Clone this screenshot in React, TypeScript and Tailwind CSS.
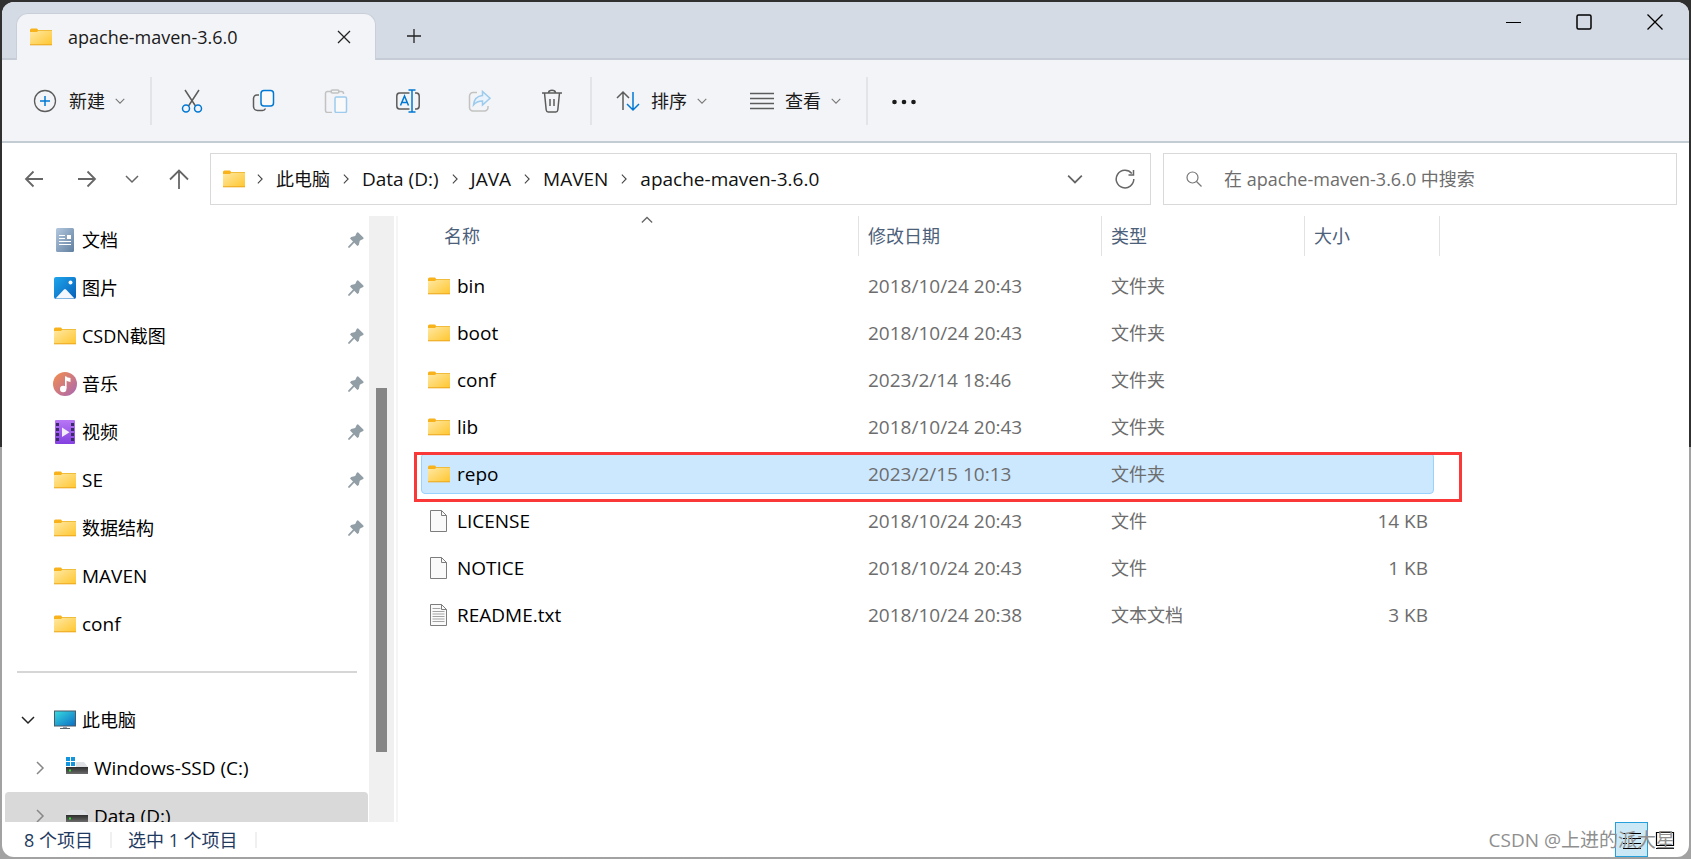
import React from 'react';

type IconKind = 'folder' | 'file' | 'text' | 'doc' | 'picture' | 'music' | 'video' | 'pc' | 'system' | 'drive';

interface FileRow {
  name: string;
  date: string;
  type: string;
  size: string;
  icon: IconKind;
  selected?: boolean;
}

const files: FileRow[] = [
  { name: 'bin', date: '2018/10/24 20:43', type: '文件夹', size: '', icon: 'folder' },
  { name: 'boot', date: '2018/10/24 20:43', type: '文件夹', size: '', icon: 'folder' },
  { name: 'conf', date: '2023/2/14 18:46', type: '文件夹', size: '', icon: 'folder' },
  { name: 'lib', date: '2018/10/24 20:43', type: '文件夹', size: '', icon: 'folder' },
  { name: 'repo', date: '2023/2/15 10:13', type: '文件夹', size: '', icon: 'folder', selected: true },
  { name: 'LICENSE', date: '2018/10/24 20:43', type: '文件', size: '14 KB', icon: 'file' },
  { name: 'NOTICE', date: '2018/10/24 20:43', type: '文件', size: '1 KB', icon: 'file' },
  { name: 'README.txt', date: '2018/10/24 20:38', type: '文本文档', size: '3 KB', icon: 'text' },
];

const pinned: { label: string; icon: IconKind; pin: boolean }[] = [
  { label: '文档', icon: 'doc', pin: true },
  { label: '图片', icon: 'picture', pin: true },
  { label: 'CSDN截图', icon: 'folder', pin: true },
  { label: '音乐', icon: 'music', pin: true },
  { label: '视频', icon: 'video', pin: true },
  { label: 'SE', icon: 'folder', pin: true },
  { label: '数据结构', icon: 'folder', pin: true },
  { label: 'MAVEN', icon: 'folder', pin: false },
  { label: 'conf', icon: 'folder', pin: false },
];

const crumbs = ['此电脑', 'Data (D:)', 'JAVA', 'MAVEN', 'apache-maven-3.6.0'];

// Latin labels run a pixel larger than Chinese ones
const sizeFor = (text: string) => (/[\u4e00-\u9fff]/.test(text) ? 'text-[18px]' : 'text-[19px]');

const Gradients = () => (
  <svg className="absolute h-0 w-0" aria-hidden="true">
    <defs>
      <linearGradient id="folder" x1="0" y1="0" x2="1" y2="1">
        <stop offset="0" stopColor="#ffe9a6" />
        <stop offset="1" stopColor="#ffc62e" />
      </linearGradient>
      <linearGradient id="doc" x1="0" y1="0" x2="1" y2="1">
        <stop offset="0" stopColor="#b4c8df" />
        <stop offset="1" stopColor="#5f7f9f" />
      </linearGradient>
      <linearGradient id="picture" x1="0" y1="0" x2="1" y2="1">
        <stop offset="0" stopColor="#1fa5ec" />
        <stop offset="1" stopColor="#0760b8" />
      </linearGradient>
      <linearGradient id="music" x1="0" y1="0" x2="1" y2="1">
        <stop offset="0" stopColor="#f58f4a" />
        <stop offset="1" stopColor="#a865b5" />
      </linearGradient>
      <linearGradient id="video" x1="0" y1="0" x2="0" y2="1">
        <stop offset="0" stopColor="#b877f5" />
        <stop offset="1" stopColor="#8340e0" />
      </linearGradient>
      <linearGradient id="screen" x1="0" y1="0" x2="1" y2="1">
        <stop offset="0" stopColor="#38dce0" />
        <stop offset="1" stopColor="#0a6cc4" />
      </linearGradient>
      <linearGradient id="drive" x1="0" y1="0" x2="0" y2="1">
        <stop offset="0" stopColor="#2e2e2e" />
        <stop offset="1" stopColor="#6a6a6a" />
      </linearGradient>
    </defs>
  </svg>
);

const ItemIcon: React.FC<{ kind: IconKind }> = ({ kind }) => (
  <svg className="h-6 w-6 shrink-0" viewBox="0 0 24 24" fill="none" aria-hidden="true">
    {kind === 'folder' && (
      <>
        <path d="M1 5a1.500 1.500 0 0 1 1.500-1.500h5.500l1.500 2v3H1z" fill="#f8b21c" />
        <path d="M1 7h7l1.500-1.500H23V20H1z" fill="url(#folder)" />
        <path d="M9 5.500h14" stroke="#f0bc3c" />
        <path d="M1 19.800h22" stroke="#eba51e" />
      </>
    )}
    {(kind === 'file' || kind === 'text') && (
      <>
        <path d="M3.500 1.500h11l5 5v16h-16z" fill="#fafafa" stroke="#7d7d7d" />
        <path d="M14.500 1.500v5h5" stroke="#7d7d7d" />
        {kind === 'text' && (
          <path d="M5.500 5.500h8M5.500 8.500h12M5.500 11h12M5.500 13.500h12M5.500 16h12M5.500 18.500h12" stroke="#a3a3a3" strokeWidth="1.200" />
        )}
      </>
    )}
    {kind === 'doc' && (
      <>
        <rect x="3" width="18" height="24" rx="1.500" fill="url(#doc)" />
        <path d="M6 7.500h6M6 10.500h6M6 13.500h12M6 16.500h12" stroke="#fff" />
        <rect x="14" y="7" width="4" height="4" fill="#fff" />
      </>
    )}
    {kind === 'picture' && (
      <>
        <rect x="1" y="1" width="22" height="22" rx="2" fill="url(#picture)" />
        <path d="M2.500 22.500 11 13.500q1-1 2 0l8.500 9z" fill="#f4f8fc" />
        <circle cx="17.500" cy="6.500" r="2" fill="#fff" />
      </>
    )}
    {kind === 'music' && (
      <>
        <circle cx="12" cy="12" r="12" fill="url(#music)" />
        <path d="M12.800 4.500v12" stroke="#fff" strokeWidth="1.600" />
        <path d="M12 4.500q3 1 5.500 1.500v4q-3-.5-5.500-2z" fill="#fff" />
        <circle cx="10.200" cy="17" r="3.200" fill="#fff" />
      </>
    )}
    {kind === 'video' && (
      <>
        <rect x="2" width="20" height="24" rx="1" fill="url(#video)" />
        <path d="M4.500 3v20M19.500 3v20" stroke="#3d2a6b" strokeWidth="3" strokeDasharray="3 2" />
        <path d="M9 7.500v9.500l7.500-4.800z" fill="#f2ecfa" />
      </>
    )}
    {kind === 'pc' && (
      <>
        <rect x="1.500" y="3" width="21" height="15" fill="url(#screen)" stroke="#4b5a66" />
        <path d="M12 18.500v2" stroke="#9aa3aa" strokeWidth="4" />
        <path d="M7 20.500h10" stroke="#58636c" />
      </>
    )}
    {(kind === 'system' || kind === 'drive') && (
      <>
        <path d="M1 11 5 6h14l4 5z" fill="#dfe1e4" />
        <rect x="1" y="11" width="22" height="7" fill="url(#drive)" />
        <rect x="4" y="13.500" width="2" height="2" fill="#2ee02e" />
        {kind === 'system' && <path d="M0 1h11v10H0z" fill="#fff" />}
        {kind === 'system' && <path d="M1 1h4v4H1zM6 1h4v4H6zM1 6h4v4H1zM6 6h4v4H6z" fill="#1395dd" />}
      </>
    )}
  </svg>
);

const Chevron: React.FC<{ className: string }> = ({ className }) => (
  <svg className={className} viewBox="0 0 14 14" fill="none" stroke="currentColor" strokeWidth="1.500" aria-hidden="true">
    <path d="m1 4 6 6 6-6" />
  </svg>
);

const Pin = () => (
  <svg className="h-4 w-4" viewBox="0 0 16 16" aria-hidden="true">
    <path d="M8.800.8q.8-.9 1.700 0l4.800 4.800q.8.900-.2 1.400l-3.300 1.700-1 4.200-1.400 1L6.200 10.800 1.500 15.700H.2v-1.300L5 9.600 2 6.500l1.200-1.400 4-1z" fill="#929ea6" />
  </svg>
);

const Tool: React.FC<{ label: string; children: React.ReactNode }> = ({ label, children }) => (
  <button aria-label={label} className="flex h-12 w-12 items-center justify-center">
    <svg className="h-6 w-6" viewBox="0 0 24 24" fill="none" stroke="#5c5c5c" strokeWidth="1.500" aria-hidden="true">
      {children}
    </svg>
  </button>
);

const TitleBar = () => (
  <header className="flex h-[58px] shrink-0 items-end border-b-2 border-[#c5ccd6] bg-[#d4dbe4] pl-3.5">
    <div className="-mb-0.5 flex h-[47px] w-[360px] items-center rounded-t-xl border-x border-t border-[#c9cfd9] bg-[#f3f4f7] pl-3 pr-6">
      <ItemIcon kind="folder" />
      <h1 className="ml-[15px] flex-1 text-[18px] font-medium leading-6 text-[#1a1a1a]">apache-maven-3.6.0</h1>
      <button aria-label="关闭标签页">
        <svg className="h-3.5 w-3.5" viewBox="0 0 14 14" stroke="#222" strokeWidth="1.300" aria-hidden="true">
          <path d="m1 1 12 12M13 1 1 13" />
        </svg>
      </button>
    </div>
    <button aria-label="新建标签页" className="mb-3.5 ml-[30px]">
      <svg className="h-4 w-4" viewBox="0 0 16 16" stroke="#222" strokeWidth="1.300" aria-hidden="true">
        <path d="M8 1v14M1 8h14" />
      </svg>
    </button>
    <div className="ml-auto flex gap-[55px] self-start pr-[26px] pt-3">
      <button aria-label="最小化">
        <svg className="h-4 w-4" viewBox="0 0 16 16" stroke="#000" aria-hidden="true">
          <path d="M1 8.500h15" />
        </svg>
      </button>
      <button aria-label="最大化">
        <svg className="h-4 w-4" viewBox="0 0 16 16" fill="none" stroke="#000" strokeWidth="1.500" aria-hidden="true">
          <rect x="1" y="1" width="14" height="14" rx="1.500" />
        </svg>
      </button>
      <button aria-label="关闭">
        <svg className="h-4 w-4" viewBox="0 0 16 16" stroke="#000" strokeWidth="1.300" aria-hidden="true">
          <path d="m.5.5 15 15M15.500.5l-15 15" />
        </svg>
      </button>
    </div>
  </header>
);

const Toolbar = () => (
  <div className="flex h-[83px] shrink-0 items-center border-b-2 border-[#c3cbd3] bg-[#f3f4f7] text-[18px] text-[#1a1a1a]">
    <button className="ml-[31px] flex items-center">
      <svg className="mr-3 h-6 w-6" viewBox="0 0 24 24" fill="none" aria-hidden="true">
        <circle cx="12" cy="12" r="10.500" stroke="#5c5c5c" strokeWidth="1.300" />
        <path d="M12 7v10M7 12h10" stroke="#0078d4" strokeWidth="1.500" />
      </svg>
      新建
      <Chevron className="ml-2.5 h-2.5 w-2.5 text-[#777]" />
    </button>
    <div className="ml-[25px] h-12 w-0.5 bg-[#e3e4e8]" />
    <div className="ml-4 flex gap-6">
      <Tool label="剪切">
        <path d="M5 1 15.500 17M19 1 8.500 17" />
        <circle cx="6" cy="19.500" r="3.500" stroke="#0078d4" />
        <circle cx="18" cy="19.500" r="3.500" stroke="#0078d4" />
      </Tool>
      <Tool label="复制">
        <path d="M7 6H5a3.500 3.500 0 0 0-3.500 3.500v8A4 4 0 0 0 5.500 21.500h5a3.500 3.500 0 0 0 3-2" />
        <rect x="9" y="1.500" width="12.500" height="15.500" rx="3" fill="#fafafa" stroke="#0078d4" />
      </Tool>
      <Tool label="粘贴">
        <path d="M8 2.500H3.500a2 2 0 0 0-2 2v17a2 2 0 0 0 2 2H8M14 2.500h3.500a2 2 0 0 1 2 2V5" stroke="#c2c2c2" />
        <rect x="7" y="1" width="8" height="3" rx="1.500" stroke="#c2c2c2" />
        <rect x="11" y="8" width="11.500" height="15.500" rx="1.500" fill="#fafafa" stroke="#9ccbee" />
      </Tool>
      <Tool label="重命名">
        <path d="M13.500 4H3.500A3 3 0 0 0 .8 7v10a3 3 0 0 0 2.700 3h10M19 4h1.500A3 3 0 0 1 23.200 7v10a3 3 0 0 1-2.700 3H19" />
        <path d="m4.500 16.500 4-9.500 4 9.500M6 13.500h5M16 1v22M12.500 1h7M12.500 23h7" stroke="#0078d4" />
      </Tool>
      <Tool label="共享">
        <path d="M9 3.500H5A3.500 3.500 0 0 0 1.500 7v11.500A3.500 3.500 0 0 0 5 22h11.500a3.500 3.500 0 0 0 3.500-3.500V17" stroke="#c2c2c2" />
        <path d="M14.500 2.500v4C9.500 7 6 10.500 5.500 16c2.500-3 5-4 9-4v4l7.500-6.800z" stroke="#9ccbee" fill="#eaf3fb" />
      </Tool>
      <Tool label="删除">
        <path d="M2 4h20M4.500 4l1.700 17q.3 2 2 2h7.600q1.700 0 2-2L19.500 4M8.500 3.500c.5-3 6.500-3 7 0M10 10v7M14 10v7" />
      </Tool>
    </div>
    <div className="ml-3.5 h-12 w-0.5 bg-[#e3e4e8]" />
    <button className="ml-6 flex items-center">
      <svg className="mr-[11px] h-6 w-6" viewBox="0 0 24 24" fill="none" strokeWidth="1.500" aria-hidden="true">
        <path d="M7 21V3M1 9l6-6 6 6" stroke="#5c5c5c" />
        <path d="M17 3v18M11 15l6 6 6-6" stroke="#0078d4" />
      </svg>
      排序
      <Chevron className="ml-2.5 h-2.5 w-2.5 text-[#777]" />
    </button>
    <button className="ml-[43px] flex items-center">
      <svg className="mr-[11px] h-6 w-6" viewBox="0 0 24 24" stroke="#5c5c5c" strokeWidth="1.500" aria-hidden="true">
        <path d="M0 4.500h24M0 9.500h24M0 14.500h24M0 19.500h24" />
      </svg>
      查看
      <Chevron className="ml-2.5 h-2.5 w-2.5 text-[#777]" />
    </button>
    <div className="ml-[25px] h-12 w-0.5 bg-[#e3e4e8]" />
    <button aria-label="更多" className="ml-6">
      <svg className="h-6 w-6" viewBox="0 0 24 24" fill="#1a1a1a" aria-hidden="true">
        <circle cx="2.500" cy="13" r="2.300" />
        <circle cx="12" cy="13" r="2.300" />
        <circle cx="21.500" cy="13" r="2.300" />
      </svg>
    </button>
  </div>
);

const AddressRow = () => (
  <div className="flex shrink-0 items-center pb-[11px] pl-[22px] pr-3 pt-2.5">
    <nav className="flex w-[186px] shrink-0 items-center text-[#666]">
      <button aria-label="后退">
        <svg className="h-5 w-5" viewBox="0 0 20 20" fill="none" stroke="currentColor" strokeWidth="1.800" aria-hidden="true">
          <path d="M19 10H2M9.500 2.500 2 10l7.500 7.500" />
        </svg>
      </button>
      <button aria-label="前进" className="ml-[33px]">
        <svg className="h-5 w-5" viewBox="0 0 20 20" fill="none" stroke="currentColor" strokeWidth="1.800" aria-hidden="true">
          <path d="M1 10h17M10.500 2.500 18 10l-7.500 7.500" />
        </svg>
      </button>
      <button aria-label="最近位置" className="ml-7">
        <Chevron className="h-3.5 w-3.5" />
      </button>
      <button aria-label="上一级" className="ml-[30px]">
        <svg className="h-5 w-5" viewBox="0 0 20 20" fill="none" stroke="currentColor" strokeWidth="1.800" aria-hidden="true">
          <path d="M10 20V1.500M1 10.500l9-9 9 9" />
        </svg>
      </button>
    </nav>
    <div className="flex h-[52px] flex-1 items-center border border-[#d9d9d9] pl-[11px] pr-[15px]">
      <ItemIcon kind="folder" />
      <div className="-ml-0.5 flex items-center">
        {crumbs.map((crumb) => (
          <React.Fragment key={crumb}>
            <Chevron className="mx-[11px] h-2.5 w-2.5 -rotate-90 text-[#444]" />
            <a href="#" className={`whitespace-nowrap text-[#111] ${sizeFor(crumb)}`}>{crumb}</a>
          </React.Fragment>
        ))}
      </div>
      <button aria-label="历史记录" className="ml-auto">
        <Chevron className="h-4 w-4 text-[#666]" />
      </button>
      <button aria-label="刷新" className="ml-8">
        <svg className="h-5 w-5" viewBox="0 0 20 20" fill="none" stroke="#666" strokeWidth="1.500" aria-hidden="true">
          <path d="M18.800 10A8.800 8.800 0 1 1 16.800 4.500M18.500 1v5h-5" />
        </svg>
      </button>
    </div>
    <label className="ml-3 flex h-[52px] w-[514px] items-center border border-[#d9d9d9] pl-[22px]">
      <svg className="h-4 w-4 shrink-0" viewBox="0 0 16 16" fill="none" stroke="#777" strokeWidth="1.200" aria-hidden="true">
        <circle cx="6.500" cy="6.500" r="5.500" />
        <path d="m10.500 10.500 5 5" />
      </svg>
      <input
        type="search"
        aria-label="搜索"
        placeholder="在 apache-maven-3.6.0 中搜索"
        className="ml-[22px] min-w-0 flex-1 text-[18px] outline-none placeholder:text-[#6d6d6d]"
      />
    </label>
  </div>
);

const Sidebar = () => (
  <aside className="flex w-[396px] shrink-0 border-r-2 border-[#f5f5f5]">
    <div className="h-full flex-1 overflow-hidden pl-[3px]">
      {pinned.map((item) => (
        <a key={item.label} href="#" className="flex h-12 items-center pl-12 pr-[5px]">
          <ItemIcon kind={item.icon} />
          <span className={`ml-[5px] flex-1 ${sizeFor(item.label)}`}>{item.label}</span>
          {item.pin && <Pin />}
        </a>
      ))}
      <div className="flex h-12 items-center pl-3 pr-3">
        <div className="h-0.5 flex-1 bg-[#d6d6d6]" />
      </div>
      <a href="#" className="flex h-12 items-center pl-4">
        <Chevron className="mr-[18px] h-3.5 w-3.5 text-[#222]" />
        <ItemIcon kind="pc" />
        <span className="ml-[5px] text-[18px]">此电脑</span>
      </a>
      <a href="#" className="flex h-12 items-center pl-7">
        <Chevron className="mr-[18px] h-3.5 w-3.5 -rotate-90 text-[#888]" />
        <ItemIcon kind="system" />
        <span className="ml-[5px] text-[19px]">Windows-SSD (C:)</span>
      </a>
      <a href="#" className="mr-px flex h-12 items-center rounded-sm bg-[#d9d9d9] pl-7">
        <Chevron className="mr-[18px] h-3.5 w-3.5 -rotate-90 text-[#888]" />
        <ItemIcon kind="drive" />
        <span className="ml-[5px] text-[19px]">Data (D:)</span>
      </a>
    </div>
    <div className="mr-0.5 flex w-[25px] flex-col items-center bg-[#f0f0f0]">
      <div className="flex-[172]" />
      <div className="w-[11px] flex-[364] bg-[#868686]" />
      <div className="flex-[70]" />
    </div>
  </aside>
);

const headCell = 'h-10 border-r border-[#e2e2e2] pl-[9px] text-left font-normal text-[#4c607a]';

const FileTable = () => (
  <main className="flex-1 overflow-hidden pl-[23px]">
    <table className="table-fixed border-separate border-spacing-0 text-[18px]">
      <colgroup>
        <col className="w-[438px]" />
        <col className="w-[243px]" />
        <col className="w-[203px]" />
        <col className="w-[135px]" />
      </colgroup>
      <thead>
        <tr>
          <th className="relative h-10 border-r border-[#e2e2e2] pl-[23px] text-left font-normal text-[#4c607a]">
            名称
            <Chevron className="absolute left-[220px] top-[-2px] h-3 w-3 rotate-180 text-[#666]" />
          </th>
          <th className={headCell}>修改日期</th>
          <th className={headCell}>类型</th>
          <th className={headCell}>大小</th>
        </tr>
      </thead>
      <tbody className="text-[#6d6d6d]">
        <tr><td colSpan={4} className="h-1.5 p-0" /></tr>
        {files.map((file) => (
          <tr key={file.name}>
            <td className="relative h-[47px] p-0">
              {file.selected && (
                <>
                  <div className="absolute left-0 top-[3px] h-[41px] w-[1013px] rounded-sm border border-[#99d1ff] bg-[#cce8ff]" />
                  <div className="absolute -left-[7px] top-[2px] z-20 h-[50px] w-[1048px] border-[3px] border-[#fb3838]" />
                </>
              )}
              <div className="relative z-10 flex items-center pl-1.5">
                <ItemIcon kind={file.icon} />
                <span className="ml-1.5 text-[19px] text-black">{file.name}</span>
              </div>
            </td>
            <td className="relative z-10 p-0 pl-[9px] text-[19px]">{file.date}</td>
            <td className="relative z-10 p-0 pl-[9px]">{file.type}</td>
            <td className="relative z-10 p-0 pr-3 text-right text-[19px]">{file.size}</td>
          </tr>
        ))}
      </tbody>
    </table>
  </main>
);

const StatusBar = () => (
  <footer className="relative flex h-[35px] shrink-0 items-center pl-[22px] text-[18px] text-[#1f3a5f]">
    <span>8 个项目</span>
    <span className="ml-[17px] mr-4 h-4 w-0.5 bg-[#f0f0f0]" />
    <span>选中 1 个项目</span>
    <span className="ml-[17px] h-4 w-0.5 bg-[#f0f0f0]" />
    <div className="ml-auto flex h-full pr-2">
      <button aria-label="详细信息" className="flex h-full w-[33px] items-center justify-center border border-[#26a0da] bg-[#cbe8f6]">
        <svg className="h-5 w-5" viewBox="0 0 20 20" stroke="#000" strokeWidth="1.200" aria-hidden="true">
          <path d="M1 3.500h4M7 3.500h12M1 8.500h4M7 8.500h12M1 13.500h4M7 13.500h12M1 18.500h18" />
        </svg>
      </button>
      <button aria-label="大图标" className="flex h-full w-[33px] items-center justify-center">
        <svg className="h-5 w-5" viewBox="0 0 20 20" fill="none" stroke="#000" strokeWidth="1.200" aria-hidden="true">
          <path d="M1.500 2.500h17v13h-17zM1 18.500h18" />
        </svg>
      </button>
    </div>
    <span className="pointer-events-none absolute right-3.5 text-[19px] text-[#8f8f8f]">CSDN @上进的派大星</span>
  </footer>
);

const App: React.FC = () => (
  <div className="h-screen bg-gradient-to-b from-[#303030] from-52% to-[#a2a2a2] to-52% p-0.5">
    <div className="flex h-full flex-col overflow-hidden rounded-xl bg-white font-['Open_Sans','Noto_Sans_CJK_SC',sans-serif] leading-6 text-black">
      <Gradients />
      <TitleBar />
      <Toolbar />
      <AddressRow />
      <div className="flex min-h-0 flex-1">
        <Sidebar />
        <FileTable />
      </div>
      <StatusBar />
    </div>
  </div>
);

export default App;
